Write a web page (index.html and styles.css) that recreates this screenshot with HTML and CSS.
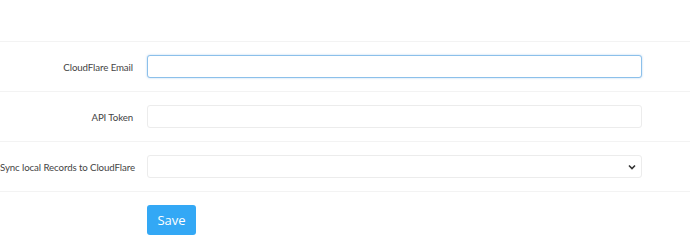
FILE: index.html
```html
<!DOCTYPE html>
<html lang="en">
<head>
    <meta charset="UTF-8">
    <title>CloudFlare Settings</title>
    <link rel="stylesheet" href="styles.css">
</head>
<body>

<form class="settings">
    <div class="row">
        <label class="label" for="cf-email">CloudFlare Email</label>
        <div class="field"><input id="cf-email" class="input focused" type="text"></div>
    </div>
    <div class="row">
        <label class="label" for="cf-token">API Token</label>
        <div class="field"><input id="cf-token" class="input" type="text"></div>
    </div>
    <div class="row">
        <label class="label" for="cf-sync">Sync local Records to CloudFlare</label>
        <div class="field">
            <div class="select">
                <span class="chevron">
                    <svg width="8" height="6" viewBox="0 0 8 6"><path d="M1 1.5 L4 4.5 L7 1.5" fill="none" stroke="#333" stroke-width="1.6"/></svg>
                </span>
            </div>
        </div>
    </div>
    <div class="actions">
        <button type="button" class="btn-save">Save</button>
    </div>
</form>

</body>
</html>
```

FILE: styles.css
```css
* {
    margin: 0;
    padding: 0;
    box-sizing: border-box;
}

html, body {
    width: 100%;
    height: 100%;
    background-color: #fff;
    font-family: "Open Sans", Arial, sans-serif;
    color: #444;
}

.settings {
    padding-top: 41px;
}

.row {
    display: flex;
    align-items: center;
    height: 50px;
    border-top: 1px solid #f3f3f3;
}

.label {
    width: 147px;
    min-width: 0;
    flex-shrink: 0;
    padding-right: 14px;
    text-align: right;
    white-space: nowrap;
    font-family: Lato, "Open Sans", Arial, sans-serif;
    font-size: 9.7px;
    letter-spacing: -0.1px;
    color: #444;
}

.field {
    width: 495px;
}

.input,
.select {
    display: block;
    width: 100%;
    height: 23px;
    border: 1px solid #ececec;
    border-radius: 3px;
    background: #fff;
    outline: none;
}

.input.focused {
    border-color: #8cc0ea;
    box-shadow: 0 0 2px rgba(90, 160, 225, 0.5);
}

.select {
    display: flex;
    justify-content: flex-end;
    align-items: center;
    padding-right: 5px;
}

.chevron {
    display: flex;
}

.actions {
    border-top: 1px solid #f3f3f3;
    padding: 13px 0 0 147px;
}

.btn-save {
    width: 49px;
    height: 30px;
    border: none;
    border-radius: 3px;
    background-color: #33a8f5;
    color: #fff;
    font-family: "Open Sans", Arial, sans-serif;
    font-size: 13px;
}
```
